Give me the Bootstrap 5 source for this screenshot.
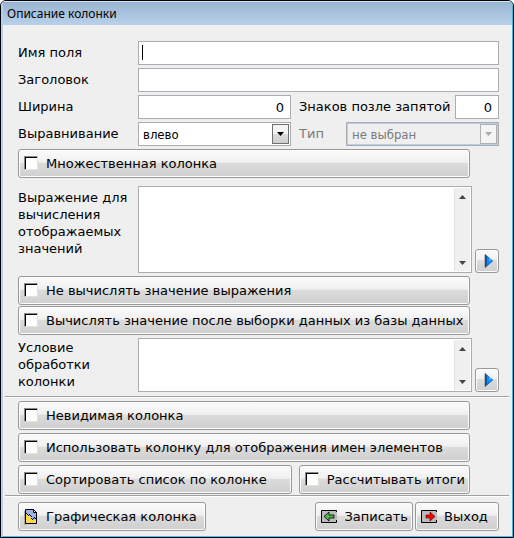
<!DOCTYPE html>
<html lang="ru">
<head>
<meta charset="utf-8">
<meta name="viewport" content="width=device-width, initial-scale=1">
<title>Описание колонки</title>
<link href="https://cdn.jsdelivr.net/npm/bootstrap@5.3.0/dist/css/bootstrap.min.css" rel="stylesheet">
<style>
body{background:#fff;font-family:"DejaVu Sans",Verdana,sans-serif;font-size:13px;line-height:17px;color:#000}
.dialog{background:#efefef;border:1px solid #000;border-radius:6px 6px 0 0;overflow:hidden}
.frame{border:solid;border-width:1px 1px 1px 2px;border-color:#cfe2f5 #35bfe8 #35cbee #b5d0f0}
.titlebar{height:23px;padding:0 4px;background:linear-gradient(#99b4d1,#b9d1ea);font:12px/24px "Noto Sans","Segoe UI",sans-serif}
.form-area{padding:16px 13px 0 15px}
.lbl-col{flex:0 0 120px}
.rows .lbl-col,.rows .after{padding-bottom:2px}
.field{height:24px;border:1px solid #abadb3;border-radius:0;background-color:#fff;padding:1px 6px 0 4px;color:#000;font:13px/20px "DejaVu Sans Condensed","DejaVu Sans",Tahoma,sans-serif;min-width:0;appearance:none}
.field.num{font-family:"DejaVu Sans",sans-serif}
.caret{background-image:linear-gradient(#000,#000);background-size:1px 15px;background-position:3px 3px;background-repeat:no-repeat}
.half{flex:0 0 153px}
.tiny{flex:0 0 44px}
.rows{display:grid;gap:3px}
.after-memo{margin-top:3px}
.pair{gap:1px}
.pick .field{width:100%;display:block}
.pick .arrow{position:absolute;top:2px;right:2px;bottom:2px;width:17px;border:1px solid #707070;background:linear-gradient(#f4f4f4 50%,#dcdcdc 50%,#cfcfcf);display:grid;place-items:center;pointer-events:none}
.arrow svg,.track svg{display:block}
.pick .field:disabled{background:#efefef;color:#7a7a7a;opacity:1;padding-left:5px;box-shadow:inset 0 0 0 1px #b5cfe7}
.pick .field:disabled+.arrow{border-color:#adb2b5;background:#f4f4f4}
.off{color:#7a7a7a}
.face{height:29px;border:1px solid #999;border-radius:3px;background:linear-gradient(#fbfbfb,#f0f0f0 46%,#dcdcdc 47%,#cfcfcf);box-shadow:inset 0 0 0 1px #fcfcfc;color:#000;font-size:13px;line-height:17px;padding:0 4px 0 5px;white-space:nowrap}
.with-side{margin-right:29px}
.box{appearance:none;width:14px;height:14px;margin:0 8px 1px 0;background:#fff;border:1px solid;border-color:#8a8a8a #e3e0d8 #e3e0d8 #8a8a8a;box-shadow:inset 1px 1px #000;flex:none}
.box:checked{background:#345}
.memo{border:1px solid #abadb3;background:#fff;flex:1;min-width:0;padding:1px}
.memo textarea{border:0;resize:none;padding:3px;flex:1;min-width:0;outline:0;font:inherit}
.track{width:16px;background:#f0f0f0;border-left:1px solid #e3e3e3;padding:7px 0 6px}
.memo-lg{height:87px}
.memo-sm{height:54px}
.go{width:24px;height:24px;padding:0;margin-left:3px}
.go svg{display:block}
.memo-label{padding:3px 0 0}
.memo-label-sm{padding:1px 0 0}
.rule{height:2px;margin:0 3px 0 2px;border-top:1px solid #a0a0a0;background:#fff}
.section{padding:3px 13px 1px 15px}
.sort{flex:1;margin-right:7px}
.actions{padding:5px 13px 5px 15px;gap:2px}
.actions .face{gap:6px}
.actions .graphic{gap:8px;padding-right:8px}
.quit{min-width:84px}
</style>
</head>
<body>
<main class="dialog">
<div class="frame">
<header class="titlebar">Описание колонки</header>
<form>
<div class="form-area">
  <div class="rows">
    <div class="d-flex align-items-center"><label class="lbl-col" for="fName">Имя поля</label><input id="fName" class="field caret flex-fill" type="text"></div>
    <div class="d-flex align-items-center"><label class="lbl-col" for="fTitle">Заголовок</label><input id="fTitle" class="field flex-fill" type="text"></div>
    <div class="d-flex align-items-center"><label class="lbl-col" for="fWidth">Ширина</label><input id="fWidth" class="field num half text-end" type="text" value="0"><label class="after flex-fill ps-2 text-nowrap" for="fDigits">Знаков позле запятой</label><input id="fDigits" class="field num tiny text-end" type="text" value="0"></div>
    <div class="d-flex align-items-center"><label class="lbl-col" for="fAlign">Выравнивание</label>
      <div class="pick half position-relative"><select id="fAlign" class="field"><option>влево</option></select><span class="arrow"><svg width="7" height="4"><path d="M0 0h7L3.5 4z"/></svg></span></div>
      <label class="after flex-fill ps-2 off" for="fType">Тип</label>
      <div class="pick half position-relative"><select id="fType" class="field" disabled><option>не выбран</option></select><span class="arrow"><svg width="7" height="4"><path fill="#aaa" d="M0 0h7L3.5 4z"/></svg></span></div></div>
    <label class="face with-side d-flex align-items-center"><input class="box" type="checkbox">Множественная колонка</label>
  </div>
  <div class="d-flex mt-2">
    <label class="lbl-col memo-label" for="fExpr">Выражение для вычисления отображаемых значений</label>
    <div class="memo memo-lg d-flex"><textarea id="fExpr"></textarea><div class="track d-flex flex-column justify-content-between align-items-center"><svg width="7" height="4"><path fill="#444" d="M0 4h7L3.5 0z"/></svg><svg width="7" height="4"><path fill="#444" d="M0 0h7L3.5 4z"/></svg></div></div>
    <button type="button" class="face go align-self-end" aria-label="Изменить выражение"><svg width="22" height="22" viewBox="0 0 22 22"><path fill="#888" opacity=".5" d="M8 5l2-1v14l-2-1z"/><path fill="#0755a8" d="M9 4l8 7-8 7z"/><path fill="#1688f8" d="M11 6l6 5-6 4z"/><path fill="#62b8ff" d="M13 8l3 2-3 1z"/></svg></button>
  </div>
  <div class="rows after-memo pair">
    <label class="face with-side d-flex align-items-center"><input class="box" type="checkbox">Не вычислять значение выражения</label>
    <label class="face with-side d-flex align-items-center"><input class="box" type="checkbox">Вычислять значение после выборки данных из базы данных</label>
  </div>
  <div class="d-flex after-memo">
    <label class="lbl-col memo-label-sm" for="fCond">Условие<br>обработки<br>колонки</label>
    <div class="memo memo-sm d-flex"><textarea id="fCond"></textarea><div class="track d-flex flex-column justify-content-between align-items-center"><svg width="7" height="4"><path fill="#444" d="M0 4h7L3.5 0z"/></svg><svg width="7" height="4"><path fill="#444" d="M0 0h7L3.5 4z"/></svg></div></div>
    <button type="button" class="face go align-self-end" aria-label="Изменить условие"><svg width="22" height="22" viewBox="0 0 22 22"><path fill="#888" opacity=".5" d="M8 5l2-1v14l-2-1z"/><path fill="#0755a8" d="M9 4l8 7-8 7z"/><path fill="#1688f8" d="M11 6l6 5-6 4z"/><path fill="#62b8ff" d="M13 8l3 2-3 1z"/></svg></button>
  </div>
</div>
<div class="rule mt-1"></div>
<div class="section rows">
  <label class="face with-side d-flex align-items-center"><input class="box" type="checkbox">Невидимая колонка</label>
  <label class="face with-side d-flex align-items-center"><input class="box" type="checkbox">Использовать колонку для отображения имен элементов</label>
  <div class="with-side d-flex">
    <label class="face sort d-flex align-items-center"><input class="box" type="checkbox">Сортировать список по колонке</label>
    <label class="face d-flex align-items-center"><input class="box" type="checkbox">Рассчитывать итоги</label>
  </div>
</div>
<div class="rule"></div>
<div class="actions d-flex">
  <button type="button" class="face graphic d-flex align-items-center me-auto"><svg width="14" height="17" viewBox="0 0 14 17"><path fill="#aaa" d="M0 3h2v14H0z"/><path fill="#9eb2ec" d="M1.500 1.500h8l3 3v11h-11z"/><path fill="#ffd940" d="M2 6h2v2h2v1h2v2h2v1h2v3H2z"/><path d="M2 5h1v1H2zM3 6h1v1H3zM4 7h1v1H4zM5 6h1v1H5zM6 7h1v1H6zM7 8h1v1H7zM7 10h1v1H7zM8 11h1v1H8zM9 10h1v1H9zM10 9h1v1h-1zM11 10h1v1h-1z"/><path fill="none" stroke="#000" d="M1.500 1.500h8l3 3v11h-11z"/><path fill="#fff" stroke="#000" d="M9.500 1.500v3h3z"/></svg>Графическая колонка</button>
  <button type="submit" class="face d-flex align-items-center"><svg width="17" height="15" viewBox="0 0 17 15"><path fill="#bbb" d="M0 1h16v13H0z"/><path fill="none" stroke="#000" d="M15.500 3V1.500H.5v12h15V11"/><path fill="#4eb84e" stroke="#000" stroke-width=".8" d="M3 7.500L8 3v3h5v3H8v3z"/></svg>Записать</button>
  <button type="button" class="face d-flex align-items-center quit"><svg width="17" height="15" viewBox="0 0 17 15"><path fill="#bbb" d="M0 1h16v13H0z"/><path fill="none" stroke="#000" d="M15.500 3V1.500H.5v12h15V11"/><path fill="#f00" stroke="#400" stroke-width=".6" d="M14 7.500L9 3v3H5v3h4v3z"/></svg>Выход</button>
</div>
</form>
</div>
</main>
<script src="https://cdn.jsdelivr.net/npm/bootstrap@5.3.0/dist/js/bootstrap.bundle.min.js"></script>
</body>
</html>
